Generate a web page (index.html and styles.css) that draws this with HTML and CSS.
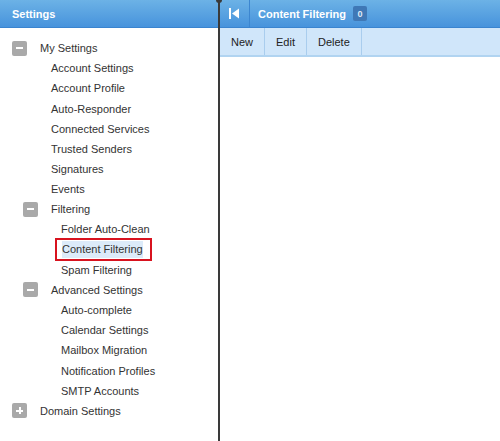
FILE: index.html
```html
<!DOCTYPE html>
<html lang="en">
<head>
    <meta charset="UTF-8">
    <title>Settings - Content Filtering</title>
    <link rel="stylesheet" href="styles.css">
</head>
<body>
    <div class="layout">
        <div class="nav-pane">
            <div class="pane-header">Settings</div>
            <ul class="tree">
                <li class="node level-1"><span class="toggle minus"></span>My Settings</li>
                <li class="node level-2">Account Settings</li>
                <li class="node level-2">Account Profile</li>
                <li class="node level-2">Auto-Responder</li>
                <li class="node level-2">Connected Services</li>
                <li class="node level-2">Trusted Senders</li>
                <li class="node level-2">Signatures</li>
                <li class="node level-2">Events</li>
                <li class="node level-2 has-toggle"><span class="toggle minus"></span>Filtering</li>
                <li class="node level-3">Folder Auto-Clean</li>
                <li class="node level-3 selected"><span class="selected-label">Content Filtering</span></li>
                <li class="node level-3">Spam Filtering</li>
                <li class="node level-2 has-toggle"><span class="toggle minus"></span>Advanced Settings</li>
                <li class="node level-3">Auto-complete</li>
                <li class="node level-3">Calendar Settings</li>
                <li class="node level-3">Mailbox Migration</li>
                <li class="node level-3">Notification Profiles</li>
                <li class="node level-3">SMTP Accounts</li>
                <li class="node level-1"><span class="toggle plus"></span>Domain Settings</li>
            </ul>
        </div>

        <div class="divider"></div>

        <div class="content-pane">
            <div class="pane-header content-header">
                <span class="collapse-btn">
                    <svg width="10" height="11" viewBox="0 0 10 11">
                        <rect x="0" y="0" width="2" height="11" fill="#fff"/>
                        <polygon points="3,5.5 10,0.5 10,10.5" fill="#fff"/>
                    </svg>
                </span>
                <span class="content-title">Content Filtering</span>
                <span class="badge">0</span>
            </div>
            <div class="toolbar">
                <span class="tool">New</span>
                <span class="tool">Edit</span>
                <span class="tool">Delete</span>
            </div>
        </div>
    </div>
</body>
</html>
```

FILE: styles.css
```css
body {
    margin: 0;
    font-family: "Liberation Sans", Arial, sans-serif;
    font-size: 11px;
    color: #333;
    background-color: #fff;
}

.layout {
    display: flex;
    height: 441px;
    overflow: hidden;
}

/* left navigation */
.nav-pane {
    width: 218px;
    flex-shrink: 0;
}

.pane-header {
    height: 28px;
    box-sizing: border-box;
    background: linear-gradient(#6cb2e6, #4793dc);
    border-bottom: 1px solid #3a84cf;
    color: #fff;
    font-weight: bold;
    display: flex;
    align-items: center;
    padding-left: 12px;
}

.tree {
    list-style: none;
    margin: 0;
    padding: 10px 0 0 0;
}

.node {
    height: 20.17px;
    display: flex;
    align-items: center;
}

.level-1 {
    padding-left: 12px;
}

.level-2 {
    padding-left: 51px;
}

.level-2.has-toggle {
    padding-left: 23px;
}

.level-3 {
    padding-left: 61px;
}

.toggle {
    width: 15px;
    height: 15px;
    border-radius: 2px;
    background-color: #a9a9a9;
    position: relative;
    margin-right: 13px;
    flex-shrink: 0;
}

.toggle::before {
    content: "";
    position: absolute;
    left: 4px;
    top: 6.5px;
    width: 7px;
    height: 2px;
    background-color: #fff;
}

.toggle.plus::after {
    content: "";
    position: absolute;
    left: 6.5px;
    top: 4px;
    width: 2px;
    height: 7px;
    background-color: #fff;
}

.level-3.selected {
    padding-left: 55px;
}

.selected-label {
    border: 2px solid #d8131f;
    padding: 0 7px 0 5px;
    height: 19px;
    line-height: 19px;
    background-color: #dcebf9;
    background-clip: content-box;
    box-shadow: inset 0 0 0 1px #fff;
}

/* splitter */
.divider {
    width: 2px;
    background-color: #3a3a3a;
    flex-shrink: 0;
    position: relative;
}

.divider::before {
    content: "";
    position: absolute;
    top: -3px;
    left: -2px;
    width: 6px;
    height: 6px;
    border-radius: 50%;
    background-color: #3a3a3a;
}

/* right content */
.content-pane {
    flex-grow: 1;
}

.content-header {
    padding-left: 0;
}

.collapse-btn {
    width: 30px;
    height: 27px;
    border-right: 1px solid #3c86d0;
    display: flex;
    align-items: center;
    padding-left: 9px;
    box-sizing: border-box;
}

.content-title {
    margin-left: 8px;
}

.badge {
    margin-left: 7px;
    background-color: #3f78b6;
    color: #dfe9f4;
    font-size: 9px;
    width: 14px;
    height: 15px;
    border-radius: 2px;
    display: flex;
    align-items: center;
    justify-content: center;
}

.toolbar {
    height: 29px;
    box-sizing: border-box;
    background-color: #d0e6fa;
    border-bottom: 2px solid #b1d4f1;
    display: flex;
}

.tool {
    padding: 0 11px;
    border-right: 1px solid #a9cdee;
    display: flex;
    align-items: center;
    font-size: 11px;
    color: #222;
}

.tool:last-child {
    padding-right: 11px;
}
```
